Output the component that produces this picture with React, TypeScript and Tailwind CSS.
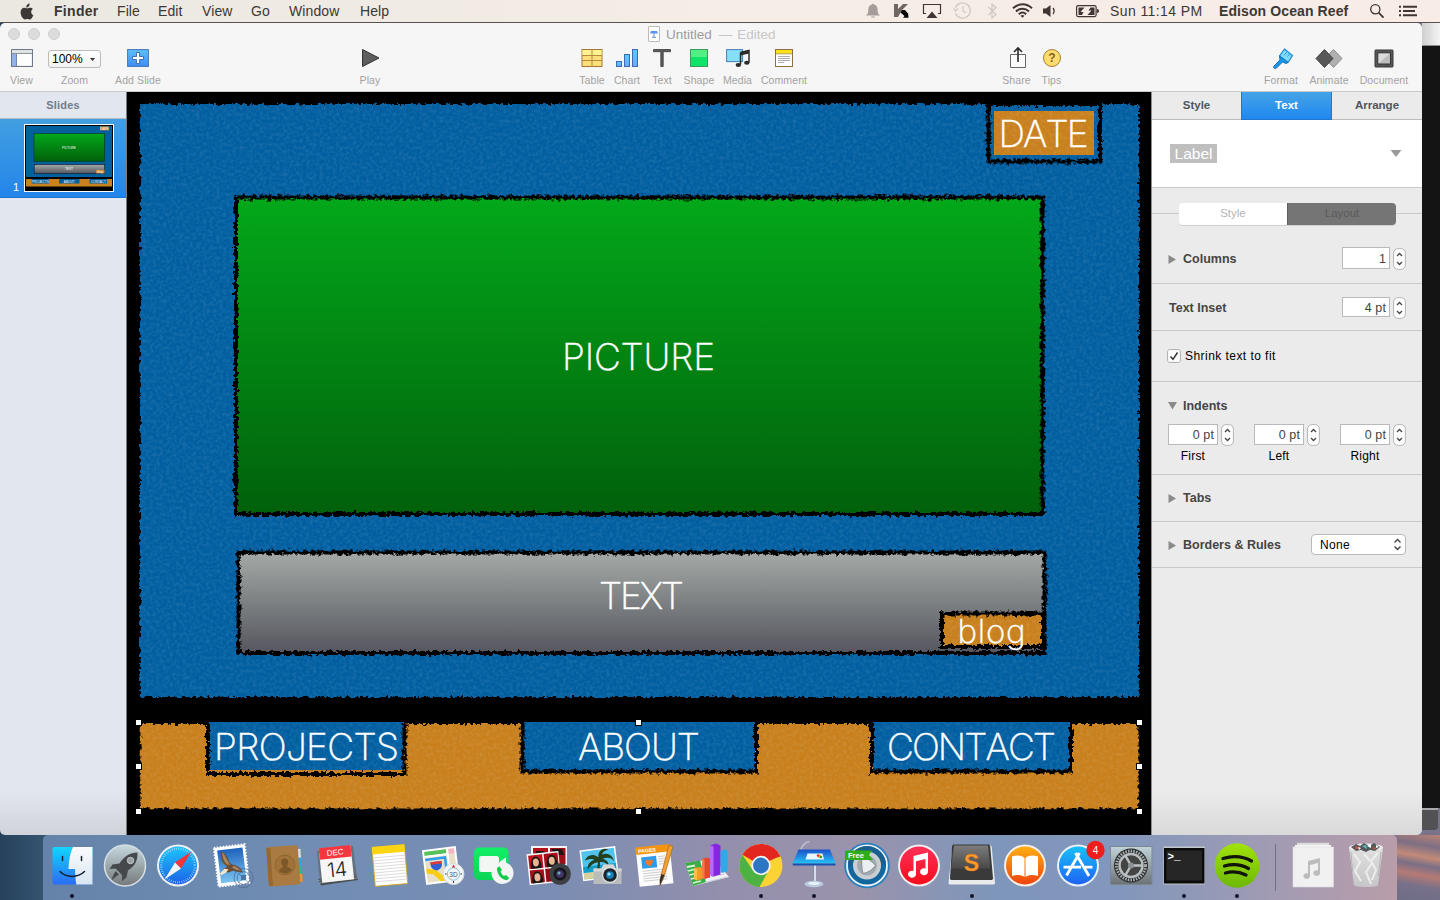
import React from "react";

type Kids = { children?: React.ReactNode };

/* ---------- Menu bar ---------- */

const menus = [
  { label: "File", cls: "w-[41px]" },
  { label: "Edit", cls: "w-[44px]" },
  { label: "View", cls: "w-[49px]" },
  { label: "Go", cls: "w-[38px]" },
  { label: "Window", cls: "w-[71px]" },
  { label: "Help", cls: "w-[40px]" },
];

function MenuBar() {
  return (
    <header className="flex h-[23px] shrink-0 items-center border-b border-[#5a504c] bg-linear-to-r from-[#ebe8e2] via-[#f5ede6] to-[#f8ece7] text-[14px] leading-none tracking-[0.1px] text-[#3b3835]">
      <svg className="ml-[20px] mr-[20px] h-[17px] w-[14px] shrink-0" viewBox="0 0 14 17">
        <path d="M9.7.6c.1 1.2-.4 2.2-1 2.9-.7.8-1.6 1.2-2.5 1.1-.1-1.1.4-2.1 1-2.8C7.900 1.100 8.900.6 9.700.6zM12.900 6c-1.100.7-1.700 1.600-1.700 2.900 0 1.500.9 2.700 2.200 3.200-.4 1.200-1 2.200-1.700 3.100-.6.8-1.200 1.200-2 1.200-.9 0-1.300-.5-2.400-.5-1.100 0-1.500.5-2.400.5-.8 0-1.500-.6-2.100-1.400C1.500 13.500.6 11.600.6 9.400c0-2.900 1.700-4.600 3.700-4.600 1 0 1.900.6 2.800.6.800 0 1.900-.7 3.100-.6 1.100 0 2.100.4 2.700 1.200z" fill="#3b3835" />
      </svg>
      <b className="w-[63px] tracking-[0.3px]">Finder</b>
      {menus.map((m) => (
        <span key={m.label} className={m.cls}>{m.label}</span>
      ))}
      <div className="ml-auto flex items-center">
        <svg className="h-[22px] w-[245px]" viewBox="860 0 245 22">
          <path d="M866 15.500c2-1.400 2.300-3.500 2.300-6 0-2.800 1.700-4.500 3.600-4.900 0-1.200 2-1.200 2 0 2 .4 3.700 2.100 3.700 4.900 0 2.500.3 4.600 2.300 6zM871 16.500h4c-.5 1.600-3.500 1.600-4 0z" fill="#a49d9a" />
          <path d="M894 4h4v5l5-5h5l-6 6-4 7h-4z" fill="#706763" />
          <path d="M900.500 12.500l1.500-2.500h3l3 3.500V12l.5 5.800h-5.500l1.500-1.800z" fill="#080808" />
          <path d="M926 13.500h-2.500v-9h17v9H938" fill="none" stroke="#403532" strokeWidth="1.200" />
          <path d="M932 11.500l5.500 6.500h-11z" fill="#403532" />
          <path d="M955.500 7.500a7.700 7.700 0 1 1 0 6M953.500 8l2 3 2.500-2.500M963 6v5l3 2" fill="none" stroke="#cfc6c2" strokeWidth="1.200" />
          <path d="M988.500 7l7.500 7.500-4 3.500V4l4 3.500-7.500 7.500" fill="none" stroke="#cfc6c2" strokeWidth="1.200" />
          <g fill="none" stroke="#403532" strokeWidth="2">
            <path d="M1013 8.300c5.500-5.300 13.500-5.300 19 0M1016 11.500c3.800-3.700 9.200-3.700 13 0M1018.800 14.300c2.200-2.100 5.200-2.100 7.400 0" />
          </g>
          <path d="M1020.500 15.800a3 3 0 0 1 4 0l-2 2z" fill="#403532" />
          <path d="M1043 8.500h3l4.500-3.500v12l-4.500-3.500h-3z" fill="#403532" />
          <path d="M1053 8a5 5 0 0 1 0 6" fill="none" stroke="#403532" strokeWidth="1.300" />
          <rect x="1076.600" y="5.600" width="19.500" height="11" rx="1.500" fill="none" stroke="#403532" strokeWidth="1.200" />
          <path d="M1078.500 7.500h6l-4 4.500h3l-1.500 3h-3.500zM1094.500 15h-7l4-4.500h-3l2-3h4z" fill="#403532" />
          <path d="M1097 9v4a2 2 0 0 0 0-4z" fill="#403532" />
        </svg>
        <span className="ml-[5px] w-[109px] tracking-[0.4px]">Sun 11:14 PM</span>
        <b className="w-[150px]">Edison Ocean Reef</b>
        <svg className="h-[16px] w-[16px]" viewBox="0 0 16 16">
          <circle cx="6.300" cy="6.200" r="4.600" fill="none" stroke="#403532" strokeWidth="1.300" />
          <path d="M9.700 9.700l4.800 5" stroke="#403532" strokeWidth="1.800" />
        </svg>
        <svg className="ml-[14px] mr-[23px] h-[12px] w-[18px]" viewBox="0 0 18 12">
          <path d="M4 1.800h14M4 6h12M4 10.200h14M0 1.800h2M0 6h2M0 10.200h2" stroke="#403532" strokeWidth="2" />
        </svg>
      </div>
    </header>
  );
}

/* ---------- Toolbar ---------- */

function Tool({ label, cls, children }: { label: string; cls: string } & Kids) {
  return (
    <div className={"flex shrink-0 flex-col items-center " + cls}>
      <div className="flex h-[29px] items-center justify-center pb-px">{children}</div>
      <span className="text-[10.500px] leading-[14px] tracking-[0.100px] whitespace-nowrap text-[#a2a2a2]">{label}</span>
    </div>
  );
}

function Toolbar() {
  return (
    <div className="flex h-[69px] shrink-0 flex-col rounded-t-[5px] border-b border-[#c9c9c9] bg-[#f6f6f6]">
      <div className="flex h-[21px] items-center">
        <div className="flex w-[648px] gap-[8px] pl-[8px]">
          <i className="size-[12px] rounded-full border border-[#cfcfcf] bg-[#dcdcdc]" />
          <i className="size-[12px] rounded-full border border-[#cfcfcf] bg-[#dcdcdc]" />
          <i className="size-[12px] rounded-full border border-[#cfcfcf] bg-[#dcdcdc]" />
        </div>
        <svg className="h-[16px] w-[12px]" viewBox="0 0 12 16">
          <rect x=".5" y=".5" width="11" height="15" rx=".5" fill="#fff" stroke="#bbb" />
          <path d="M3 5h6l1 2.500H2z" fill="#5b94f0" />
          <path d="M6 7v4M4 11.300h4" stroke="#7ea6e6" strokeWidth="1.300" />
        </svg>
        <span className="ml-[6px] pt-[2px] text-[13.500px] leading-none whitespace-pre text-[#9d9d9d]">
          Untitled<span className="ml-[7px] text-[#c6c6c6]">—</span><span className="ml-[5px] text-[#c6c6c6]">Edited</span>
        </span>
      </div>
      <div className="flex">
        <Tool label="View" cls="w-[43px]">
          <svg className="h-[20px] w-[22px]" viewBox="0 0 22 20">
            <rect x=".6" y="1.600" width="20.800" height="16.800" fill="#fff" stroke="#5d6b7d" />
            <rect x="1" y="2" width="20" height="3" fill="#dfe3e1" />
            <path d="M1 5.500h20" stroke="#8792a0" />
            <rect x="1" y="6" width="4.500" height="12" fill="#8fb0e8" />
            <path d="M5.500 6v12" stroke="#6e86b5" />
          </svg>
        </Tool>
        <Tool label="Zoom" cls="w-[63px]">
          <div className="mt-[2px] flex h-[18px] w-[53px] items-center justify-between rounded-[3px] border border-[#bbb] bg-linear-to-b from-white to-[#f2f2f2] pr-[5px] pl-[3px] text-[12px] leading-none text-black">
            <span>100%</span>
            <svg className="h-[3px] w-[5px]" viewBox="0 0 5 3"><path d="M0 0h5l-2.500 3z" fill="#333" /></svg>
          </div>
        </Tool>
        <Tool label="Add Slide" cls="w-[64px]">
          <svg className="h-[20px] w-[22px]" viewBox="0 0 22 20">
            <defs><linearGradient id="add" x2="0" y2="1"><stop stopColor="#5cc0fb" /><stop offset="1" stopColor="#408cf5" /></linearGradient></defs>
            <rect x=".6" y="1.600" width="20.800" height="16.800" fill="url(#add)" stroke="#4574b8" />
            <path d="M9.500 4.500h3v4h4v3h-4v4h-3v-4h-4v-3h4z" fill="#fff" stroke="#3767ac" strokeWidth=".9" />
          </svg>
        </Tool>
        <Tool label="Play" cls="ml-[180px] w-[40px]">
          <svg className="ml-[2px] h-[20px] w-[18px]" viewBox="0 0 18 20"><path d="M.5 1.500l16.500 8.500L.5 18.500z" fill="#5e5e5e" stroke="#333" /></svg>
        </Tool>
        <Tool label="Table" cls="ml-[184px] w-[36px]">
          <svg className="h-[20px] w-[22px]" viewBox="0 0 22 20">
            <rect x="1" y="1.500" width="20" height="17" fill="#fbe07a" stroke="#a87835" />
            <rect x="1.500" y="2" width="19" height="5" fill="#fff490" />
            <path d="M1 7.500h20M1 12.500h20M11 2v16" stroke="#b68a45" />
          </svg>
        </Tool>
        <Tool label="Chart" cls="w-[34px]">
          <svg className="h-[20px] w-[22px]" viewBox="0 0 22 20">
            <defs><linearGradient id="bar" x2="0" y2="1"><stop stopColor="#55cefa" /><stop offset="1" stopColor="#6fa6f7" /></linearGradient></defs>
            <g fill="url(#bar)" stroke="#3e6bb0"><rect x=".5" y="13.500" width="5" height="5" /><rect x="8.500" y="6.500" width="5" height="12" /><rect x="16.500" y="1.500" width="5" height="17" /></g>
          </svg>
        </Tool>
        <Tool label="Text" cls="w-[36px]">
          <svg className="h-[20px] w-[18px]" viewBox="0 0 18 20"><path d="M.5 1.500h17v2.200H10.200v14.800H7.800V3.700H.5z" fill="#5c5c5c" stroke="#3a3a3a" strokeWidth=".8" /></svg>
        </Tool>
        <Tool label="Shape" cls="w-[38px]">
          <svg className="h-[20px] w-[18px]" viewBox="0 0 18 20">
            <rect x=".5" y="1.500" width="17" height="17" fill="#10e468" stroke="#3c9a5c" />
            <rect x="1" y="2" width="16" height="7" fill="#52f083" />
          </svg>
        </Tool>
        <Tool label="Media" cls="w-[39px]">
          <svg className="h-[20px] w-[24px]" viewBox="0 0 24 20">
            <rect x=".6" y="1.600" width="16" height="12" fill="#86dff8" stroke="#4a7fb8" />
            <path d="M14.500 4.500l8.500-2v12M14.500 4.500v12" fill="none" stroke="#2b2b2b" strokeWidth="1.500" />
            <path d="M14.500 4l8.500-2v3.500l-8.500 2z" fill="#2b2b2b" />
            <ellipse cx="12.300" cy="17" rx="2.700" ry="2" fill="#2b2b2b" /><ellipse cx="20.800" cy="14.800" rx="2.700" ry="2" fill="#2b2b2b" />
          </svg>
        </Tool>
        <Tool label="Comment" cls="w-[54px]">
          <svg className="h-[20px] w-[18px]" viewBox="0 0 18 20">
            <rect x=".5" y="1.500" width="17" height="17" fill="#fff" stroke="#8c7040" />
            <rect x="1" y="2" width="16" height="3.500" fill="#fbe11c" /><path d="M1 5.800h16" stroke="#b89a30" />
            <path d="M3 8.500h12M3 10.500h12M3 12.500h12M3 14.500h6" stroke="#a5a5a5" strokeWidth=".9" />
          </svg>
        </Tool>
        <Tool label="Share" cls="ml-[187px] w-[37px]">
          <svg className="ml-[3px] h-[24px] w-[18px]" viewBox="0 0 18 24">
            <path d="M1.500 8.500h15v13h-15z" fill="#fbfbfb" stroke="#686868" />
            <path d="M9 16V3M5 6l4-4 4 4" fill="none" stroke="#2c2c2c" strokeWidth="1.600" />
          </svg>
        </Tool>
        <Tool label="Tips" cls="w-[33px]">
          <svg className="h-[20px] w-[20px]" viewBox="0 0 20 20">
            <circle cx="10" cy="10" r="8.500" fill="#fddd70" stroke="#a97d2c" />
            <text x="10" y="14.200" textAnchor="middle" fontSize="12" fontWeight="700" fill="#85601c">?</text>
          </svg>
        </Tool>
        <Tool label="Format" cls="ml-[189px] w-[48px]">
          <svg className="ml-[3px] h-[24px] w-[24px]" viewBox="0 0 24 24">
            <path d="M13.500 3l8 6.500-4.500 7-8.500-6.500z" fill="#7ddcf9" stroke="#1b82cf" strokeWidth="1.100" />
            <path d="M16.500 5.500l-3.500 4M19 7.500l-2.500 3" stroke="#2f9bdd" />
            <path d="M8.500 10l8.500 6.500-2 1-3.500-1.500-6 6c-1.800 1.500-3.700-.3-2.500-2l6-6z" fill="#1a96e8" stroke="#1c72b8" />
          </svg>
        </Tool>
        <Tool label="Animate" cls="w-[48px]">
          <svg className="h-[20px] w-[28px]" viewBox="0 0 28 20">
            <path d="M18.500 1.500l8.500 9-8.500 9-8.500-9z" fill="#b0b0b0" stroke="#8f8f8f" />
            <path d="M9.500 1.500l8.500 9-8.500 9-8.500-9z" fill="#585858" stroke="#444" />
          </svg>
        </Tool>
        <Tool label="Document" cls="w-[62px]">
          <svg className="h-[20px] w-[20px]" viewBox="0 0 20 20">
            <rect x="1" y="2" width="18" height="17" rx=".5" fill="#575757" stroke="#393939" />
            <rect x="4" y="5" width="12.500" height="11" fill="#bdbdbd" stroke="#333" />
            <path d="M4.500 15.500V5.500h11.500z" fill="#dcdcdc" />
          </svg>
        </Tool>
      </div>
    </div>
  );
}

/* ---------- Slide ---------- */

const LIGHT = "Inter, 'Liberation Sans', sans-serif";

function Rough({ x, y, w, h, s = 4 }: { x: number; y: number; w: number; h: number; s?: number }) {
  return <rect x={x} y={y} width={w} height={h} fill="none" stroke="#000" strokeWidth={s} filter="url(#rough)" />;
}

function SlideText({ x, y, len, size, children }: { x: number; y: number; len: number; size: number; children: string }) {
  return (
    <text x={x} y={y} textLength={len} fontSize={size} fontWeight={250} fontFamily={LIGHT} fill="#fff" stroke="#fff" strokeWidth=".45" style={{ fontKerning: "none" }}>
      {children}
    </text>
  );
}

function SlideDefs() {
  return (
    <svg className="absolute size-0">
      <defs>
        <filter id="rough" filterUnits="userSpaceOnUse" x="127" y="92" width="1024" height="743" colorInterpolationFilters="sRGB">
          <feTurbulence type="fractalNoise" baseFrequency=".28" numOctaves="3" seed="4" result="n" />
          <feDisplacementMap in="SourceGraphic" in2="n" scale="6.500" xChannelSelector="R" yChannelSelector="G" />
        </filter>
        <filter id="grain" filterUnits="userSpaceOnUse" x="127" y="92" width="1024" height="743" colorInterpolationFilters="sRGB">
          <feTurbulence type="fractalNoise" baseFrequency=".3" numOctaves="2" seed="8" />
          <feColorMatrix values="0 0 0 0 1  0 0 0 0 1  0 0 0 0 1  .2 0 0 0 -.07" />
          <feComposite in2="SourceGraphic" operator="in" result="g" />
          <feMerge><feMergeNode in="SourceGraphic" /><feMergeNode in="g" /></feMerge>
        </filter>
        <linearGradient id="green" x2="0" y2="1"><stop stopColor="#03a81a" /><stop offset="1" stopColor="#01600b" /></linearGradient>
        <linearGradient id="gray" x2="0" y2="1"><stop stopColor="#a5a9a6" /><stop offset=".5" stopColor="#7c8082" /><stop offset="1" stopColor="#55565f" /></linearGradient>
      </defs>
    </svg>
  );
}

const BLUE = "#005ea1";
const ORANGE = "#c87f1c";

function Slide() {
  return (
    <svg className="h-[743px] w-[1024px] shrink-0 bg-black" viewBox="127 92 1024 743">
      <rect x="139" y="103" width="1001" height="595" fill={BLUE} filter="url(#grain)" />
      <Rough x={138} y={102} w={1003} h={597} />
      <rect x="988" y="98" width="112" height="7" fill="#000" />
      <Rough x={988.500} y={104} w={111.500} h={57.500} />
      <rect x="994" y="111" width="100" height="44" fill={ORANGE} filter="url(#grain)" />
      <SlideText x={998.500} y={146.500} len={90} size={37}>DATE</SlideText>

      <rect x="236" y="198" width="806" height="316" fill="url(#green)" />
      <Rough x={236} y={197.500} w={806.500} h={316.500} />
      <SlideText x={562} y={369.500} len={153} size={37}>PICTURE</SlideText>

      <rect x="238" y="552" width="806" height="101" fill="url(#gray)" />
      <Rough x={238.500} y={552.500} w={806} h={100.500} />
      <rect x="943" y="614" width="99" height="33" fill={ORANGE} filter="url(#grain)" />
      <Rough x={942} y={613.500} w={101} h={33.500} />
      <SlideText x={599} y={608.500} len={85} size={37}>TEXT</SlideText>
      <SlideText x={957.500} y={643} len={68} size={33}>blog</SlideText>

      <rect x="139.500" y="723" width="1000" height="86.500" fill={ORANGE} filter="url(#grain)" />
      <Rough x={138.500} y={722} w={1002} h={88.500} />
      <rect x="209" y="722" width="195" height="48" fill={BLUE} filter="url(#grain)" />
      <path d="M208 723V774H404.500V723" fill="none" stroke="#000" strokeWidth="4" filter="url(#rough)" />
      <SlideText x={214} y={760} len={185} size={37}>PROJECTS</SlideText>
      <rect x="523" y="722" width="232" height="49" fill={BLUE} filter="url(#grain)" />
      <path d="M522.500 723V771.500H756V723" fill="none" stroke="#000" strokeWidth="4" filter="url(#rough)" />
      <SlideText x={578} y={760} len={122} size={37}>ABOUT</SlideText>
      <rect x="873" y="722" width="197" height="49" fill={BLUE} filter="url(#grain)" />
      <path d="M872 723V771.500H1071V723" fill="none" stroke="#000" strokeWidth="4" filter="url(#rough)" />
      <SlideText x={887} y={760} len={169} size={37}>CONTACT</SlideText>

      {[[138.500, 722.500], [638.500, 722.500], [1139.500, 722.500], [138.500, 766.500], [1139.500, 766.500], [138.500, 811.500], [638.500, 811.500], [1139.500, 811.500]].map(([cx, cy]) => (
        <rect key={cx + "-" + cy} x={cx - 3} y={cy - 3} width="6" height="6" fill="#fff" stroke="#000" />
      ))}
    </svg>
  );
}

function Thumbnail() {
  return (
    <svg className="h-[68px] w-[90px]" viewBox="0 0 90 68">
      <rect width="90" height="68" fill="#fff" />
      <rect x="1" y="1" width="88" height="66" fill="#000" />
      <rect x="2" y="2" width="86" height="51" fill="#03609f" />
      <rect x="76" y="2.500" width="9" height="3.800" fill="#d28b35" />
      <rect x="10" y="9.500" width="70.500" height="28" fill="url(#green)" stroke="#023a30" strokeWidth=".7" />
      <rect x="10.200" y="40.500" width="70.500" height="9" fill="url(#gray)" stroke="#123" strokeWidth=".7" />
      <rect x="72" y="46" width="8.500" height="3.300" fill="#d28b35" />
      <rect x="2" y="55" width="86" height="7.500" fill="#c9821f" />
      <rect x="7.500" y="55" width="17.500" height="4.500" fill="#03609f" /><rect x="35" y="55" width="20.500" height="4.500" fill="#03609f" /><rect x="65.500" y="55" width="17.500" height="4.500" fill="#03609f" />
      <g fill="#fff" fontSize="3.200" textAnchor="middle">
        <text x="45" y="24.800">PICTURE</text><text x="45" y="46">TEXT</text><text x="80.500" y="5.600">DATE</text><text x="76.200" y="49" fontSize="2.800">blog</text>
        <text x="16.300" y="58.500">PROJECTS</text><text x="45.300" y="58.500">ABOUT</text><text x="74.300" y="58.500">CONTACT</text>
      </g>
    </svg>
  );
}

function Sidebar() {
  return (
    <aside className="flex w-[127px] shrink-0 flex-col rounded-bl-[5px] border-r border-[#777c84] bg-linear-to-b from-[#e2e6ef] from-94% to-[#d0d3d9]">
      <div className="flex h-[27px] items-center justify-center border-b border-[#b4bac4] text-[11px] font-bold tracking-[0.2px] text-[#717c8a]">Slides</div>
      <div className="flex h-[79px] border-b border-[#1f74cf] bg-linear-to-b from-[#429fe1] to-[#2385ea] pt-[5px]">
        <span className="mt-[57px] w-[24px] pl-[13px] text-[11px] leading-[12px] text-white">1</span>
        <Thumbnail />
      </div>
    </aside>
  );
}

/* ---------- Inspector ---------- */

function Stepper() {
  return (
    <svg className="h-[22px] w-[13px] shrink-0" viewBox="0 0 13 22">
      <rect x=".6" y=".6" width="11.800" height="20.800" rx="4.500" fill="#fff" stroke="#b4b4b4" />
      <path d="M4 8l2.500-2.500L9 8M4 14l2.500 2.500L9 14" fill="none" stroke="#444" strokeWidth="1.300" />
    </svg>
  );
}

function Field({ value, cls }: { value: string; cls: string }) {
  return <div className={"flex shrink-0 items-center justify-end border border-[#b9b9b9] bg-white pt-[2px] pr-[3px] text-[12.500px] leading-none tracking-[0.100px] text-[#444] " + cls}>{value}</div>;
}

function Arrow({ open }: { open?: boolean }) {
  return (
    <svg className="mr-[6px] h-[9px] w-[9px]" viewBox="0 0 9 9">
      <path d={open ? "M0 0h9L4.500 7.500z" : "M.5 0l7.500 4.500L.5 9z"} fill="#8a8a8a" />
    </svg>
  );
}

function Head({ children }: Kids) {
  return <b className="text-[12.500px] leading-none text-[#454545]">{children}</b>;
}

function Inspector() {
  return (
    <aside className="flex w-[271px] shrink-0 flex-col rounded-br-[5px] border-l border-[#8e8e8e] bg-linear-to-b from-[#ebebeb] from-94% to-[#d9d9d9]">
      <div className="flex h-[28px] shrink-0 text-[11.500px] font-bold">
        <div className="flex w-[89px] items-center justify-center border-b border-[#bdbdbd] text-[#50565d]">Style</div>
        <div className="flex w-[91px] items-center justify-center border border-t-0 border-[#1f78cc] bg-linear-to-b from-[#44a3e6] to-[#1f88f0] text-white">Text</div>
        <div className="flex w-[90px] items-center justify-center border-b border-[#bdbdbd] text-[#50565d]">Arrange</div>
      </div>
      <div className="flex h-[68px] shrink-0 items-center justify-between border-b border-[#cacaca] bg-white pr-[20px] pl-[18px]">
        <span className="flex h-[19px] w-[47px] items-center justify-center bg-[#bfbfbf] pt-px text-[15.500px] leading-none text-white">Label</span>
        <svg className="h-[7px] w-[12px]" viewBox="0 0 12 7"><path d="M.5 0h11L6 7z" fill="#999" /></svg>
      </div>
      <div className="flex h-[51px] shrink-0 items-center">
        <i className="h-px w-[27px] bg-[#cacaca]" />
        <div className="flex h-[22px] w-[217px] overflow-hidden rounded-[4px] text-[11.500px] shadow-[0_1px_0_#d0d0d0]">
          <span className="flex w-[108px] items-center justify-center bg-white text-[#b4b4b4]">Style</span>
          <span className="flex w-[109px] items-center justify-center border-l border-[#5e5e5e] bg-[#757575] text-[#5a5a5a]">Layout</span>
        </div>
        <i className="h-px flex-1 bg-[#cacaca]" />
      </div>
      <div className="flex h-[45px] shrink-0 items-start border-b border-[#cacaca] pr-[16px] pl-[16px]">
        <div className="flex h-[40px] items-center"><Arrow /><Head>Columns</Head></div>
        <div className="ml-auto flex pt-[8px]"><Field value="1" cls="h-[22px] w-[48px]" /><div className="pt-[1px] pl-[3px]"><Stepper /></div></div>
      </div>
      <div className="flex h-[47px] shrink-0 items-center border-b border-[#cacaca] pr-[16px] pl-[17px] pt-[2px]">
        <Head>Text Inset</Head>
        <div className="ml-auto flex"><Field value="4 pt" cls="h-[20px] w-[48px]" /><div className="pl-[3px]"><Stepper /></div></div>
      </div>
      <div className="flex h-[51px] shrink-0 items-center border-b border-[#cacaca] pl-[15px]">
        <svg className="h-[14px] w-[14px]" viewBox="0 0 14 14">
          <rect x=".6" y=".6" width="12.800" height="12.800" rx="2" fill="#fff" stroke="#adadad" />
          <path d="M3.500 7.500L6 10.300 10.500 3.500" fill="none" stroke="#333" strokeWidth="1.500" />
        </svg>
        <span className="ml-[4px] text-[12px] leading-none tracking-[0.450px] text-black">Shrink text to fit</span>
      </div>
      <div className="flex h-[93px] shrink-0 flex-col border-b border-[#cacaca] pl-[16px]">
        <div className="flex h-[42px] items-center pt-[6px]"><Arrow open /><Head>Indents</Head></div>
        <div className="flex">
          {["First", "Left", "Right"].map((n) => (
            <div key={n} className="w-[86px] shrink-0">
              <div className="flex"><Field value="0 pt" cls="h-[21px] w-[50px]" /><div className="pl-[3px]"><Stepper /></div></div>
              <div className="w-[50px] pt-[4px] text-center text-[12px] leading-none tracking-[0.200px] text-black">{n}</div>
            </div>
          ))}
        </div>
      </div>
      <div className="flex h-[47px] shrink-0 items-center border-b border-[#cacaca] pt-px pl-[16px]"><Arrow /><Head>Tabs</Head></div>
      <div className="flex h-[46px] shrink-0 items-center border-b border-[#cacaca] pt-px pr-[16px] pl-[16px]">
        <Arrow /><Head>Borders &amp; Rules</Head>
        <div className="mb-px ml-auto flex h-[21px] w-[95px] items-center justify-between rounded-[4px] border border-[#b9b9b9] bg-white pr-[4px] pl-[8px] text-[12px] leading-none tracking-[0.300px] text-black">
          None
          <svg className="h-[13px] w-[7px]" viewBox="0 0 7 13"><path d="M.5 4.500l3-3 3 3M.5 8.500l3 3 3-3" fill="none" stroke="#444" strokeWidth="1.400" /></svg>
        </div>
      </div>
    </aside>
  );
}

/* ---------- Dock ---------- */

function G({ id, a, b }: { id: string; a: string; b: string }) {
  return <linearGradient id={id} x2="0" y2="1"><stop stopColor={a} /><stop offset="1" stopColor={b} /></linearGradient>;
}

const icons: { name: string; dot?: boolean; art: React.ReactNode }[] = [
  { name: "finder", dot: true, art: <>
    <G id="f1" a="#12d6fd" b="#2b6cf5" /><G id="f2" a="#fafbfd" b="#d8e6f3" />
    <rect x="4.500" y="5" width="40" height="37.500" rx="1.500" fill="url(#f1)" />
    <path d="M25 5h19.500v37.500H28.300c-.8-5-1.100-9-1.200-15.500h-6.600C20.800 19 22 11 25 5z" fill="url(#f2)" />
    <path d="M14.500 14.500v4M33.500 14.500v4M12 29.500c6 6.500 18 6.500 24.500 0" fill="none" stroke="#14202e" strokeWidth="1.500" strokeLinecap="round" /></> },
  { name: "launchpad", art: <>
    <G id="l1" a="#c5d8de" b="#75797b" /><circle cx="24" cy="23.500" r="20.500" fill="url(#l1)" stroke="#d5dfe5" strokeWidth="1.500" />
    <path d="M36.500 10.500c-9 0-14 5-18 11l-7 1-3 4.500 6-.5 6.500 6.500 0 6 4.500-3.500 1.500-7c6-4 10-9 9.500-18z" fill="#45494b" />
    <circle cx="29.500" cy="18.500" r="3.200" fill="#9aa1a4" stroke="#c5cacd" /><path d="M14.500 29l3.500 3.500-3 2-4 3.500c0-3 1.500-5 3.500-9z" fill="#45494b" /></> },
  { name: "safari", art: <>
    <G id="s1" a="#1bc6fb" b="#1c62e6" /><circle cx="24" cy="23.500" r="21" fill="#eef1f4" /><circle cx="24" cy="23.500" r="19" fill="url(#s1)" />
    <circle cx="24" cy="23.500" r="16.800" fill="none" stroke="#bfe6ff" strokeWidth="2.200" strokeDasharray=".6 1.600" />
    <path d="M37.500 9.500L27 26.500l-6-6z" fill="#f33438" /><path d="M10.500 37.500L21 20.500l6 6z" fill="#f2f5f8" /></> },
  { name: "mail", art: <>
    <g transform="rotate(-7 24 23)">
    <G id="m1" a="#1d62bd" b="#7cc4f0" /><rect x="9" y="4" width="31" height="39" fill="#fff" stroke="#fff" strokeWidth="2" strokeDasharray="1.500 1.500" />
    <rect x="12" y="7" width="25.500" height="33" fill="url(#m1)" />
    <path d="M16 8c3 2 5 5 6 9 0 3 2 5 4 6 4 1 8 4 9 9-3-1-6-1-9-3-2 0-4 1-6 1l-5-2c1-2 3-3 5-4-5-4-6-10-4-16z" fill="#6b4e33" />
    <path d="M17 9c2 3 3 6 4 9l2 5-3-1c-3-4-4-8-3-13zM26 24c3 1 6 4 7 6-3-1-6-2-8-4z" fill="#a98660" />
    <path d="M12 30l5-4 4 1-3 3-5 2z" fill="#f2e6cc" /></g>
    <g fill="none" stroke="#4a6791" opacity=".75"><circle cx="36.500" cy="36" r="9.500" /><circle cx="36.500" cy="36" r="6.500" /><path d="M31 31l11 10M42 31L31 41" strokeWidth=".7" /></g><rect x="34" y="33" width="5" height="5" fill="#3f5f91" opacity=".7" /></> },
  { name: "contacts", art: <g transform="rotate(-4 24 23)">
    <path d="M37 8h4.500v9H37z" fill="#d9dde0" /><path d="M37 17h4.500v8H37z" fill="#2fa7d8" /><path d="M37 25h4.500v8H37z" fill="#20c18a" /><path d="M37 33h4.500v8H37z" fill="#f0962b" />
    <rect x="7.500" y="4" width="31.500" height="39.500" rx="2" fill="#a97b43" /><path d="M7.500 5h4v38h-4z" fill="#94682f" />
    <circle cx="25" cy="23" r="9.800" fill="#a1733a" stroke="#85602d" strokeWidth=".8" /><path d="M18.500 28.500c1-3 4.500-2 4.500-4.500-3-4-1.500-7.500 2-7.500s5 3.500 2 7.500c0 2.500 3.500 1.500 4.500 4.500-3.500 4-9.500 4-13 0z" fill="#7c5828" /></g> },
  { name: "calendar", art: <>
    <path d="M5 37l38-5 2 6-37 5.500z" fill="#4a5052" /><path d="M5 38.500l39-5M6.500 41l38-5" stroke="#9aa3a6" strokeWidth=".8" />
    <path d="M4 9l36-5 4 32-37 4z" fill="#5d6668" opacity=".7" />
    <g transform="rotate(-6 24 23)"><rect x="7.500" y="5" width="32" height="34" fill="#f6f6f6" /><rect x="7.500" y="4.500" width="32" height="11.500" fill="#f5363f" />
    <text x="23.500" y="13" textAnchor="middle" fontSize="8" fill="#fff">DEC</text>
    <text x="23.500" y="34.500" textAnchor="middle" fontSize="20" fontWeight="300" fontFamily={LIGHT} letterSpacing="-.5" fill="#222">14</text></g></> },
  { name: "notes", art: <g transform="rotate(-5 24 23)">
    <rect x="7.500" y="4" width="32.500" height="39" fill="#fff" stroke="#d0a91d" strokeWidth=".9" /><rect x="7.500" y="3.500" width="32.500" height="7.500" fill="#fcd512" />
    <path d="M8 14.500h32M8 17.500h32M8 20.500h32M8 23.500h32M8 26.500h32M8 29.500h32M8 32.500h32M8 35.500h32M8 38.500h32" stroke="#d5d5d5" strokeWidth=".8" /></g> },
  { name: "maps", art: <>
    <g transform="rotate(-7 22 24)"><rect x="5" y="6" width="34" height="35" fill="#fff" /><rect x="7" y="8" width="30" height="31" fill="#e8dfc8" />
    <path d="M7 8h22v4H7z" fill="#55c15b" /><path d="M31 8h6v5h-6z" fill="#f5b5c4" /><path d="M7 12h22v2H7zM29 8h2v31h-2z" fill="#fff" /><path d="M7 16h20v23" fill="none" stroke="#2e9df0" strokeWidth="2.500" /><path d="M7 25l9 2 12 12h-8L13 31l-6-1z" fill="#f9cd12" />
    <path d="M12 19h11c1 6-2 8-5.500 9-3.500-1-6.500-3-5.500-9z" fill="#315fd0" /><path d="M12 19h11v2.500H12z" fill="#e23b3c" /></g>
    <circle cx="34.500" cy="32" r="10.500" fill="#f2f5f6" stroke="#d5d9dc" /><circle cx="34.500" cy="32" r="6.200" fill="none" stroke="#7ebed5" strokeWidth=".9" /><path d="M34.500 22.500l1.600 3h-3.200z" fill="#e22" /><path d="M34.500 39v2M26 32h1.500M41.500 32h1.500" stroke="#333" /><text x="34.500" y="34.500" textAnchor="middle" fontSize="6.500" fill="#555">3D</text></> },
  { name: "facetime", art: <>
    <G id="t1" a="#10f065" b="#0ad555" /><rect x="2" y="5.500" width="34.500" height="32.500" rx="5" fill="url(#t1)" /><rect x="7" y="14" width="20" height="16" rx="2.500" fill="#f2f7f3" /><path d="M28 19.500l6-4v13l-6-4z" fill="#f2f7f3" />
    <circle cx="30.500" cy="31" r="11" fill="#f3f5f4" /><path d="M25 26l2.500-1.800 2.500 3.800-1.500 1.800c.8 2 2 3.300 3.500 4.200l2-1 3.200 3-2.200 2.200c-6-.7-10-5.500-10-12.200z" fill="#12ca4c" /></> },
  { name: "photobooth", art: <>
    <rect x="6" y="4" width="36" height="20" fill="#f5f5f5" /><rect x="8" y="6" width="15" height="16" fill="#b4111b" /><rect x="25" y="6" width="15.500" height="16" fill="#9c0d17" /><path d="M11 9h8l3 4h-12zM27 7h10l2 6H28z" fill="#1a1514" />
    <g transform="rotate(-6 20 26)"><rect x="3" y="10.500" width="32" height="31" fill="#f8f8f8" /><rect x="4.500" y="12" width="14" height="13.500" fill="#c0131d" /><rect x="20" y="12" width="14" height="13.500" fill="#a90e18" /><rect x="4.500" y="27" width="14" height="13" fill="#a30e18" /><rect x="20" y="27" width="14" height="13" fill="#920c15" />
    <path d="M6 25.500c0-16 11-16 11 0zM22 25.500c0-16 11-16 11 0zM6 40c0-15 11-15 11 0z" fill="#1a1514" /><ellipse cx="11.500" cy="19.500" rx="3" ry="4" fill="#e8b597" /><ellipse cx="27.500" cy="19.500" rx="3" ry="4" fill="#e8b597" /><ellipse cx="11.500" cy="34.500" rx="3" ry="4" fill="#e8b597" /></g>
    <circle cx="35" cy="32" r="10.800" fill="#3d4042" /><circle cx="35" cy="32" r="6.500" fill="#15171b" /><circle cx="35" cy="32" r="3.800" fill="#45336d" /><circle cx="34" cy="31" r="1.500" fill="#57b9a4" /></> },
  { name: "iphoto", art: <>
    <g transform="rotate(-7 22 20)"><rect x="3" y="6" width="36" height="31" fill="#fff" /><rect x="4.500" y="7.500" width="33" height="28" fill="#52c3ee" /><path d="M4.500 29h33v6.500h-33z" fill="#d9d0a0" /><path d="M4.500 23h33v6h-33z" fill="#0f9fc8" />
    <path d="M21 15c-6-5-11-3-14 2 5-2 8-1 10 0-6 1-8 5-8 9 4-5 8-6 11-6l-3 12h3l2-12c4 0 7 2 8 6 1-5-1-7-5-9 5-1 9 0 11 4 0-6-6-10-11-8 1-3 4-4 7-4-5-4-11 0-11 6z" fill="#24401f" /></g>
    <path d="M15.500 26.500h8l2-4h10l2 4h6v15.500h-28z" fill="#b9bcbd" /><path d="M15.500 26.500h8l2-4h10l2 4h6v3h-28z" fill="#d4d6d6" /><circle cx="32" cy="33" r="8" fill="#e1e3e3" /><circle cx="32" cy="33" r="6.800" fill="#1b242a" /><circle cx="32" cy="33" r="3.800" fill="#1482b8" /><circle cx="31" cy="32" r="1.600" fill="#99e5ff" /></> },
  { name: "pages", art: <>
    <g transform="rotate(-6 24 23)"><rect x="6.500" y="5" width="34" height="38" fill="#fdfdfd" /><rect x="6.500" y="3.500" width="34" height="7.500" fill="#f49413" /><text x="8.500" y="9.500" fontSize="5.200" fontWeight="700" fill="#fff">PAGES</text>
    <rect x="11" y="14" width="15" height="11.500" fill="#2e9bea" /><path d="M18.500 24c-5-4-4-7-1.500-7l1.500 1 1.500-1c3 0 3.500 3-1.500 7z" fill="#f37a25" /><path d="M28 15h7M28 17.500h7M28 20h7M28 22.500h7M11 28h24M11 30.500h24M11 33h24M11 35.500h24M11 38h24" stroke="#cacaca" strokeWidth=".9" /></g>
    <path d="M38 3l4 1.500-9.500 32-3.500 7 .5-8z" fill="#f5a12f" stroke="#a8661c" strokeWidth=".7" /><path d="M30.500 32l3 1-4.500 10.500-.3-5z" fill="#2e3034" /></> },
  { name: "numbers", art: <>
    <path d="M1 21l29-4 15 18-36 9z" fill="#f1f2f4" /><path d="M1 21l15-2.500 6 21.500-13 4z" fill="#3aad45" /><path d="M3 25l8-1.500M4 29l8-2M5.500 33l8-2M7 37l8-2M9 41l8-2" stroke="#d8f2d9" strokeWidth="1.800" /><path d="M23 40l20-5M21 36l20-4" stroke="#c8c9d8" />
    <path d="M10 26l5-1 3 1v11l-5 1.500-3-1.500z" fill="#f59c26" /><path d="M10 26l3 1v11.500l-3-1.500z" fill="#fbc04c" /><path d="M18 17l5-1.500 3 1v19l-5.500 1.500-2.500-1z" fill="#e24a28" /><path d="M18 17l2.500 1v19l-2.500-1z" fill="#f77c54" /><path d="M26 3.500l6-2 4.500 2v29l-7.500 2-3-1.500z" fill="#8526e0" /><path d="M26 3.500l3.500 1v30l-3.500-1.500z" fill="#b869f7" /><path d="M36.500 9l4-1.500 3 1.500v20l-5 2-2-1z" fill="#32a8ec" /></> },
  { name: "chrome", dot: true, art: <>
    <circle cx="24" cy="23.500" r="21.500" fill="#fbd334" />
    <path d="M24 23.500L5.400 12.700A21.500 21.500 0 0 1 43.600 14.500H24z" fill="#e42620" />
    <path d="M5.400 12.700A21.500 21.500 0 0 0 22.500 45L31.500 28.500 24 23.500 15.700 28z" fill="#4db242" />
    <path d="M24 14h19.600L32 19z" fill="#e42620" />
    <circle cx="24" cy="23.500" r="9.700" fill="#f6f6f6" /><circle cx="24" cy="23.500" r="7.900" fill="#2c76c4" /></> },
  { name: "keynote", dot: true, art: <>
    <G id="k1" a="#1d4fc8" b="#25c3f6" /><path d="M10.500 9c2-8 7-9.500 9-9" fill="none" stroke="#c8ccd6" strokeWidth="1.200" /><path d="M23 22h3v20h-3z" fill="#d7dde6" /><path d="M23 22h1v20h-1z" fill="#8090a8" />
    <ellipse cx="24" cy="42" rx="9.500" ry="3.200" fill="#b8cbe0" /><ellipse cx="24" cy="41.300" rx="6" ry="1.600" fill="#eaf2fa" /><path d="M8.500 7.500h31.500l5.500 14H2.500z" fill="url(#k1)" /><path d="M2.500 21.500h43v2H3z" fill="#1a4fb0" /><path d="M17.500 11.500h15l1.500 6h-18.500z" fill="#e8f6fd" /><circle cx="29.500" cy="14.300" r="1.800" fill="#f39b24" /><circle cx="28" cy="13.500" r="1.200" fill="#d33" /><circle cx="31" cy="15" r="1.200" fill="#2a9b3f" /></> },
  { name: "player", art: <>
    <circle cx="24" cy="23.500" r="22.800" fill="#2a80be" /><circle cx="24" cy="23.500" r="20" fill="#13679f" stroke="#f0f5f8" strokeWidth="1.800" /><path d="M5 23a19 19 0 0 1 38 0z" fill="#1b5f8e" /><circle cx="24" cy="23.500" r="14" fill="#c9ced2" /><circle cx="24" cy="23.500" r="10" fill="#a3abb2" /><path d="M19 14.500c5 1 10 5 13.500 9-3 4-7 7-12.500 8-1.500-6-1.500-11-1-17z" fill="#eceff1" stroke="#777f88" strokeWidth=".8" />
    <path d="M2 8.500h27l-3 4.500 4 5H2z" fill="#2fae19" /><text x="5" y="16" fontSize="7.500" fontWeight="700" fill="#fff">Free</text></> },
  { name: "itunes", art: <>
    <G id="i1" a="#fb3058" b="#f60d1c" /><circle cx="24" cy="23.500" r="21" fill="#f3eef0" /><circle cx="24" cy="23.500" r="19" fill="url(#i1)" />
    <path d="M18.500 14l14.500-3.500v19.500a4 3.500 0 1 1-2.500-3.500V17l-9.500 2.200v13.300a4 3.500 0 1 1-2.500-3.500z" fill="#fff" /></> },
  { name: "sublime", dot: true, art: <>
    <G id="b1" a="#7c7c7c" b="#484848" /><path d="M4.500 3h37c1.500 0 2 1 2.300 2.500L47 41c0 1-1 1.500-2 1.500H2c-1 0-1.500-.5-1.500-1.500z" fill="#e9ebeb" /><path d="M6 2.500h34c1.500 0 2 .5 2.200 2L45 36c0 1.500-.5 2-2 2H3.500c-1 0-1.700-.7-1.500-2l2-31.500c0-1.500 1-2 2-2z" fill="#3a3a3a" /><path d="M6 3.500h34l2.300 23H3z" fill="url(#b1)" />
    <text x="23.500" y="28.500" textAnchor="middle" fontSize="23" fontWeight="700" fill="#ff9a2e" stroke="#c86a10" strokeWidth=".4">S</text></> },
  { name: "ibooks", art: <>
    <G id="o1" a="#fdae12" b="#f0430d" /><circle cx="24" cy="23.500" r="21" fill="#f7efe8" /><circle cx="24" cy="23.500" r="19" fill="url(#o1)" /><path d="M23.500 16c-3-3-8-3-12.500-1.500V34c4-1.500 9-1.500 12.500 1zM24.500 16c3-3 8-3 12.500-1.500V34c-4-1.500-9-1.500-12.500 1z" fill="#fff" /></> },
  { name: "appstore", art: <>
    <G id="a1" a="#18bff9" b="#1e63f3" /><circle cx="24" cy="23.500" r="21" fill="#eaf1f7" /><circle cx="24" cy="23.500" r="19" fill="url(#a1)" />
    <path d="M25.500 11L12.500 33.500M21.500 11L35 34M9.500 25.200H27M31 25.200h7.500" stroke="#fff" strokeWidth="2.800" fill="none" />
    <circle cx="41.500" cy="8" r="9.200" fill="#ef1e1c" /><text x="41.500" y="11.500" textAnchor="middle" fontSize="10" fill="#fff">4</text></> },
  { name: "settings", art: <>
    <G id="g1" a="#c1d4da" b="#6c7276" /><rect x="3.500" y="4.500" width="41.500" height="38" fill="url(#g1)" stroke="#7b8890" />
    <circle cx="24" cy="23.500" r="17" fill="#26292a" /><circle cx="24" cy="23.500" r="14.500" fill="none" stroke="#a4a9ab" strokeWidth="3" strokeDasharray="1.600 1.100" /><circle cx="24" cy="23.500" r="11.500" fill="#444" stroke="#b7bcbf" strokeWidth="2.500" /><path d="M24 23.500h12M24 23.500l-6-10.500M24 23.500l-6 10.500" stroke="#bcc1c3" strokeWidth="2.500" /><circle cx="24" cy="23.500" r="3" fill="#8c9193" /></> },
  { name: "terminal", dot: true, art: <>
    <rect x="3.500" y="4.500" width="41.500" height="38" fill="#c2c9cc" /><rect x="4" y="6" width="40.500" height="35.500" fill="#0b0b0b" /><rect x="6.500" y="8.500" width="35.500" height="30" fill="#262626" /><text x="7.500" y="17.500" fontSize="11" fontWeight="700" fontFamily="'Liberation Mono', monospace" fill="#fff">&gt;_</text></> },
  { name: "spotify", dot: true, art: <>
    <G id="y1" a="#a1e20c" b="#6db805" /><circle cx="24" cy="23.500" r="22.300" fill="url(#y1)" /><path d="M10 16.500c10-3 20.500-2 28.500 2.500M11.500 24c9-2.500 17-1.500 24 2.500M12.500 31c7-2 14-1.200 20.500 2" fill="none" stroke="#10140a" strokeWidth="3.300" strokeLinecap="round" /></> },
];

function Dock() {
  return (
    <footer className="ml-[43px] flex h-[65px] w-[1354px] shrink-0 items-start rounded-t-[5px] bg-[linear-gradient(90deg,#6583a9_0%,#718db4_20%,#7b8db2_38%,#938fac_50%,#9b93ac_60%,#7e96ba_70%,#8297bb_80%,#a29bb3_91%,#b99da9_100%)] pt-[7px] pl-[3px]">
      {icons.map((i) => (
        <div key={i.name} className="flex w-[52.950px] shrink-0 flex-col items-center">
          <svg className="h-[48px] w-[48px] overflow-visible" viewBox="0 0 48 48">{i.art}</svg>
          {i.dot && <i className="mt-[4px] size-[4px] rounded-full bg-[#101428]" />}
        </div>
      ))}
      <i className="mt-[2px] ml-[11px] h-[47px] w-px bg-[#71708c]" />
      <div className="ml-[11px] flex w-[53px] justify-center">
        <svg className="h-[48px] w-[48px]" viewBox="0 0 48 48">
          <path d="M8 .8h32v4H8z" fill="#dedede" /><path d="M6 3h36v4H6z" fill="#f5f5f5" /><rect x="4" y="5" width="40.500" height="40" fill="#f1f1f1" stroke="#ddd" strokeWidth=".6" />
          <path d="M19 19l12-3v15a3.300 2.800 0 1 1-2-2.500v-7.500l-8 2v11a3.300 2.800 0 1 1-2-2.500z" fill="#bcbcbc" />
        </svg>
      </div>
      <div className="flex w-[53px] justify-center">
        <svg className="h-[48px] w-[48px]" viewBox="0 0 48 48">
          <G id="tr" a="#e0e0e0" b="#c6c6c8" />
          <path d="M7 5h34l-5 38.500c-6 2-18 2-24 0z" fill="url(#tr)" />
          <path d="M12 12l6 8-5 9 6 10M22 12l8 9-6 9 5 12M36 11l-7 8 5 9-4 10" stroke="#f4f4f4" strokeWidth="2" fill="none" opacity=".8" />
          <path d="M9 10l1.500 20M39 10l-2.500 24" stroke="#b3b3b7" fill="none" />
          <ellipse cx="24" cy="5.500" rx="17" ry="4" fill="#ececec" />
          <path d="M9 5l5-3 4 2 4-3 5 3 5-3 6 4-5 4-5-1-4 2-5-2-5 1z" fill="#55585c" /><path d="M13 4l4 1-3 3zM31 5l4 1-3 2z" fill="#c9563c" /><path d="M20 4l4-1 1 4z" fill="#58c3ba" /><path d="M25 4l4-2 0 4zM16 5l3 1-2 2zM34 3l3 2-3 1z" fill="#fff" />
        </svg>
      </div>
    </footer>
  );
}

export default function App() {
  return (
    <div className="flex h-[900px] w-[1440px] flex-col overflow-hidden bg-[linear-gradient(90deg,#26415c_0%,#35546f_3%,#7d7c96_96%,#79738a_99%)] font-['Liberation_Sans',Arial,sans-serif]">
      <SlideDefs />
      <MenuBar />
      <div className="flex h-[812px] shrink-0">
        <div className="flex w-[1422px] shrink-0 flex-col">
          <Toolbar />
          <div className="flex h-[743px]">
            <Sidebar />
            <Slide />
            <Inspector />
          </div>
        </div>
        <div className="flex w-[18px] flex-col">
          <div className="h-[23px] border-b border-[#8b8b8b] bg-linear-to-r from-[#cfcfcf] to-[#f4f4f4]" />
          <div className="h-[762px] bg-[#141414]" />
          <div className="h-[22px] w-[16px] rounded-br-[4px] border-t-2 border-[#aaa] bg-[#525254]" />
        </div>
      </div>
      <div className="flex">
        <Dock />
        <div className="h-[65px] w-[43px] bg-[linear-gradient(190deg,#b98274_0%,#7d6f84_18%,#c28a78_34%,#7a6f86_46%,#b47a74_60%,#77708a_76%,#6f6d88_100%)]" />
      </div>
    </div>
  );
}
